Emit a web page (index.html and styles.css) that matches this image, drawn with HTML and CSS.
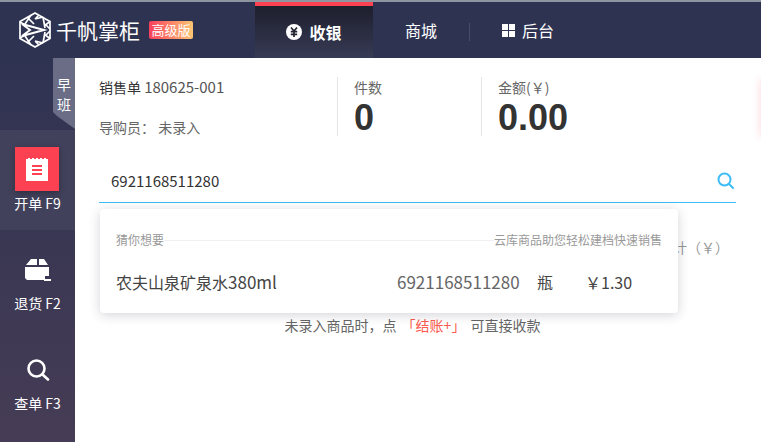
FILE: index.html
```html
<!DOCTYPE html>
<html lang="zh-CN">
<head>
    <meta charset="UTF-8">
    <title>千帆掌柜</title>
    <link rel="stylesheet" href="styles.css">
</head>
<body>
    <header class="topbar">
        <div class="brand">
            <svg class="logo" width="32" height="36" viewBox="0 0 32 36" fill="none" stroke="#fff" stroke-width="1.700">
                <path d="M16 1 L31 9.500 V26.500 L16 35 L1 26.500 V9.500 Z"/>
                <path d="M8 5 L15 12 M12 3 L6 12 M16 7 L20 3 M16 7 L24 5 M24 5 L26 16 M31 9.500 L25 14 M27 13 L31 17"/>
                <path d="M8 31 L15 24 M12 33 L6 24 M16 29 L20 33 M16 29 L24 31 M24 31 L26 20 M31 26.500 L25 22 M27 23 L31 19"/>
                <path d="M1 10 L8 14 M1 26 L8 22"/>
                <path d="M3 12 L25 18 L3 24 L11 18 Z" stroke-width="2" fill="#2f3352"/>
            </svg>
            <span class="brand-name">千帆掌柜</span>
            <span class="badge">高级版</span>
        </div>
        <nav class="tabs">
            <a class="tab tab-active">
                <svg width="16" height="16" viewBox="0 0 16 16">
                    <circle cx="8" cy="8" r="8" fill="#fff"/>
                    <path d="M5 3.500 L8 7 L11 3.500 M4.800 7.600 H11.200 M4.800 10.300 H11.200 M8 7 V13" fill="none" stroke="#22242f" stroke-width="1.700"/>
                </svg>
                收银
            </a>
            <a class="tab tab-shop">商城</a>
            <a class="tab tab-admin">
                <svg width="13" height="13" viewBox="0 0 13 13" fill="#fff">
                    <rect width="6" height="6"/><rect x="7" width="6" height="6"/>
                    <rect y="7" width="6" height="6"/><rect x="7" y="7" width="6" height="6"/>
                </svg>
                后台
            </a>
        </nav>
    </header>

    <div class="layout">
        <aside class="sidebar">
            <div class="shift"><span>早</span><span>班</span></div>
            <a class="side-item side-active">
                <span class="side-icon-box">
                    <svg width="22" height="23" viewBox="0 0 22 23">
                        <path d="M0 1 H2 V0 H4 V1 H6 V0 H8 V1 H10 V0 H12 V1 H14 V0 H16 V1 H18 V0 H20 V1 H22 V23 H0 Z" fill="#fff"/>
                        <path d="M6 8 H16 M6 12 H16 M6 16 H16" stroke="#fb4152" stroke-width="2"/>
                    </svg>
                </span>
                开单 F9
            </a>
            <a class="side-item">
                <svg class="side-icon" width="26" height="22" viewBox="0 0 26 22" fill="#fff">
                    <path d="M1 6 L6 0 H12 V6 Z M14 0 H19 L23 6 H14 Z"/>
                    <path d="M0 8 H24 V17 H20 V21 H2 L0 19 Z"/>
                    <rect x="19" y="20" width="7" height="2"/>
                </svg>
                退货 F2
            </a>
            <a class="side-item">
                <svg class="side-icon" width="24" height="22" viewBox="0 0 24 22" fill="none" stroke="#fff" stroke-width="2.600">
                    <circle cx="10.500" cy="9.500" r="8"/>
                    <path d="M16.500 15.500 L22 20.500" stroke-linecap="round"/>
                </svg>
                查单 F3
            </a>
        </aside>

        <main class="main">
            <section class="summary">
                <div class="order">
                    <div>销售单 <span class="order-no">180625-001</span></div>
                    <div class="order-guide">导购员： 未录入</div>
                </div>
                <div class="stat">
                    <div class="stat-label">件数</div>
                    <div class="stat-value">0</div>
                </div>
                <div class="stat">
                    <div class="stat-label">金额(￥)</div>
                    <div class="stat-value">0.00</div>
                </div>
            </section>

            <div class="search">
                <span>6921168511280</span>
                <svg width="17" height="17" viewBox="0 0 17 17" fill="none" stroke="#3dbcf7" stroke-width="2">
                    <circle cx="7.500" cy="7.500" r="6"/>
                    <path d="M12 12 L16 16" stroke-linecap="round"/>
                </svg>
            </div>

            <div class="table-head">合计（￥）</div>
            <p class="hint">未录入商品时，点 <span class="hint-red">「结账+」</span> 可直接收款</p>

            <div class="suggest">
                <div class="suggest-head">
                    <span>猜你想要</span>
                    <span class="suggest-line"></span>
                    <span>云库商品助您轻松建档快速销售</span>
                </div>
                <div class="suggest-row">
                    <span class="item-name">农夫山泉矿泉水<span class="item-size">380ml</span></span>
                    <span class="item-code">6921168511280</span>
                    <span class="item-unit">瓶</span>
                    <span class="item-price">￥1.30</span>
                </div>
            </div>
            <div class="edge-glow"></div>
        </main>
    </div>
</body>
</html>
```

FILE: styles.css
```css
*{
    margin: 0;
    padding: 0;
    box-sizing: border-box;
}
html, body{
    height: 100%;
    overflow: hidden;
}
body{
    font-family: "Noto Sans CJK SC", "Open Sans", sans-serif;
    background-color: #fff;
    color: #333;
    display: flex;
    flex-direction: column;
}

/* top bar */
.topbar{
    height: 58px;
    flex: none;
    display: flex;
    background-color: #2f3352;
    border-top: 2px solid #8c95a0;
}
.brand{
    width: 255px;
    padding: 10px 0 0 19px;
    display: flex;
    align-items: flex-start;
}
.brand-name{
    margin-left: 5px;
    color: #fff;
    font-size: 21px;
    line-height: 36px;
}
.badge{
    margin: 9px 0 0 9px;
    width: 44px;
    height: 18px;
    border-radius: 2px;
    color: #fff;
    font-size: 13px;
    line-height: 18px;
    text-align: center;
    white-space: nowrap;
    background: linear-gradient(90deg, #f7405c, #fdc673);
}
.tabs{
    display: flex;
}
.tab{
    display: flex;
    align-items: center;
    justify-content: center;
    color: #fff;
    font-size: 16px;
}
.tab-active{
    width: 118px;
    gap: 7px;
    font-weight: 700;
    border-top: 4px solid #fb4152;
    background: linear-gradient(180deg, #1d1f2d, #373b54);
}
.tab-shop{
    width: 96px;
    position: relative;
}
.tab-shop::after{
    content: "";
    position: absolute;
    right: -1px;
    top: 21px;
    height: 18px;
    border-right: 1px solid #474b68;
}
.tab-admin{
    width: 100px;
    gap: 7px;
    padding-left: 33px;
    justify-content: flex-start;
}

/* left side */
.layout{
    flex: 1;
    display: flex;
    min-height: 0;
}
.sidebar{
    width: 75px;
    flex: none;
    background: linear-gradient(180deg, #2f3352, #463c55);
    position: relative;
    padding-top: 72px;
}
.shift{
    position: absolute;
    left: 53px;
    top: 0;
    width: 22px;
    height: 71px;
    padding-top: 16px;
    display: flex;
    flex-direction: column;
    align-items: center;
    color: #fff;
    font-size: 14px;
    line-height: 20px;
    background-color: #6a6d85;
    clip-path: polygon(0 0, 100% 0, 100% 100%, 4px 58px, 0 54px);
}
.side-item{
    height: 100px;
    display: flex;
    flex-direction: column;
    align-items: center;
    color: #fff;
    font-size: 14px;
    line-height: 20px;
    padding-top: 29px;
    gap: 12px;
}
.side-active{
    background-color: #41415b;
    padding-top: 17px;
    gap: 2px;
}
.side-icon-box{
    width: 44px;
    height: 44px;
    margin-right: 1px;
    display: flex;
    align-items: center;
    justify-content: center;
    background-color: #fb4152;
    box-shadow: 0 2px 6px rgba(0,0,0,0.3);
}

/* main area */
.main{
    flex: 1;
    position: relative;
    padding: 19px 25px 0 24px;
    min-width: 0;
}
.summary{
    display: flex;
    height: 59px;
}
.order{
    width: 238px;
    font-size: 14px;
    line-height: 20px;
    color: #333;
}
.order-no{
    font-size: 15px;
    color: #555;
}
.order-guide{
    margin-top: 20px;
    color: #666;
}
.stat{
    border-left: 1px solid #e5e5e5;
    padding-left: 16px;
    width: 144px;
}
.stat-label{
    font-size: 14px;
    line-height: 20px;
    color: #666;
}
.stat-value{
    margin-top: 2px;
    font-family: "Liberation Sans", sans-serif;
    font-size: 36px;
    font-weight: 700;
    line-height: 38px;
    color: #333;
}
.search{
    margin-top: 25px;
    height: 42px;
    padding: 0 2px 2px 12px;
    display: flex;
    align-items: center;
    justify-content: space-between;
    border-bottom: 1px solid #3dbcf7;
    font-size: 15px;
    color: #333;
}
.table-head{
    margin-top: 34px;
    padding-right: 7px;
    text-align: right;
    font-size: 14px;
    line-height: 20px;
    color: #999;
}
.hint{
    margin-top: 58px;
    text-align: center;
    font-size: 14px;
    line-height: 20px;
    word-spacing: 2px;
    color: #666;
    padding-right: 10px;
}
.hint-red{
    color: #fb5a4e;
}

/* suggestion popup */
.suggest{
    position: absolute;
    left: 25px;
    top: 151px;
    width: 578px;
    height: 104px;
    padding: 22px 16px 0;
    background-color: #fff;
    border-radius: 4px;
    box-shadow: 0 2px 12px rgba(40,40,70,0.2);
}
.suggest-head{
    display: flex;
    align-items: center;
    font-size: 12px;
    line-height: 18px;
    color: #999;
}
.suggest-line{
    flex: 1;
    border-top: 1px solid #f0f0f4;
}
.suggest-row{
    margin-top: 21px;
    display: flex;
    align-items: center;
    font-size: 16px;
    line-height: 24px;
    color: #555;
}
.item-name{
    width: 281px;
    color: #444;
}
.item-size{
    font-size: 17px;
}
.item-code{
    width: 140px;
    font-size: 17px;
    color: #666;
}
.item-unit{
    width: 48px;
    color: #444;
}
.item-price{
    color: #444;
    white-space: nowrap;
}
.edge-glow{
    position: absolute;
    right: -6px;
    top: 22px;
    width: 6px;
    height: 56px;
    box-shadow: 0 0 8px rgba(251,65,82,0.25);
}
```
